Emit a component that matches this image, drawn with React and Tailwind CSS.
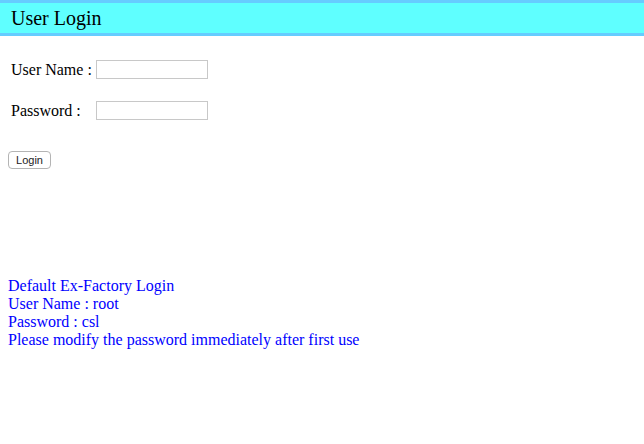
import React, { useState } from 'react';

const serif = { fontFamily: '"Liberation Serif", "Times New Roman", serif' };

const App = () => {
    const [userName, setUserName] = useState('');
    const [password, setPassword] = useState('');

    return (
        <div className="w-[644px] h-[444px] bg-white" style={serif}>
            {/* Header */}
            <div className="h-[36px] border-y-[3px] border-[#66ccff] bg-[#5fffff] flex items-center pl-[11px]">
                <h1 className="text-[20px] leading-[23px] text-black">User Login</h1>
            </div>

            {/* Form */}
            <form className="pt-[24px] pl-[11px]" onSubmit={(e) => e.preventDefault()}>
                <div className="flex items-center h-[19px]">
                    <label className="w-[85px] text-[16px] leading-[18px]">User Name :</label>
                    <input
                        type="text"
                        value={userName}
                        onChange={(e) => setUserName(e.target.value)}
                        className="w-[112px] h-[19px] border border-[#c8c8c8] bg-white outline-none"
                    />
                </div>
                <div className="flex items-center h-[19px] mt-[22px]">
                    <label className="w-[85px] text-[16px] leading-[18px]">Password :</label>
                    <input
                        type="password"
                        value={password}
                        onChange={(e) => setPassword(e.target.value)}
                        className="w-[112px] h-[19px] border border-[#c8c8c8] bg-white outline-none"
                    />
                </div>
                <button
                    type="submit"
                    className="mt-[31px] -ml-[3px] w-[43px] h-[18px] border border-[#b4b4b4] rounded-[4px] bg-white text-[11px] leading-none text-[#222]"
                    style={{ fontFamily: '"Liberation Sans", Arial, sans-serif' }}
                >
                    Login
                </button>
            </form>

            {/* Default credentials */}
            <div className="mt-[106px] pl-[8px] text-[16px] leading-[18px] text-[#0000ff]">
                <div>Default Ex-Factory Login</div>
                <div>User Name : root</div>
                <div>Password : csl</div>
                <div>Please modify the password immediately after first use</div>
            </div>
        </div>
    );
};

export default App;
